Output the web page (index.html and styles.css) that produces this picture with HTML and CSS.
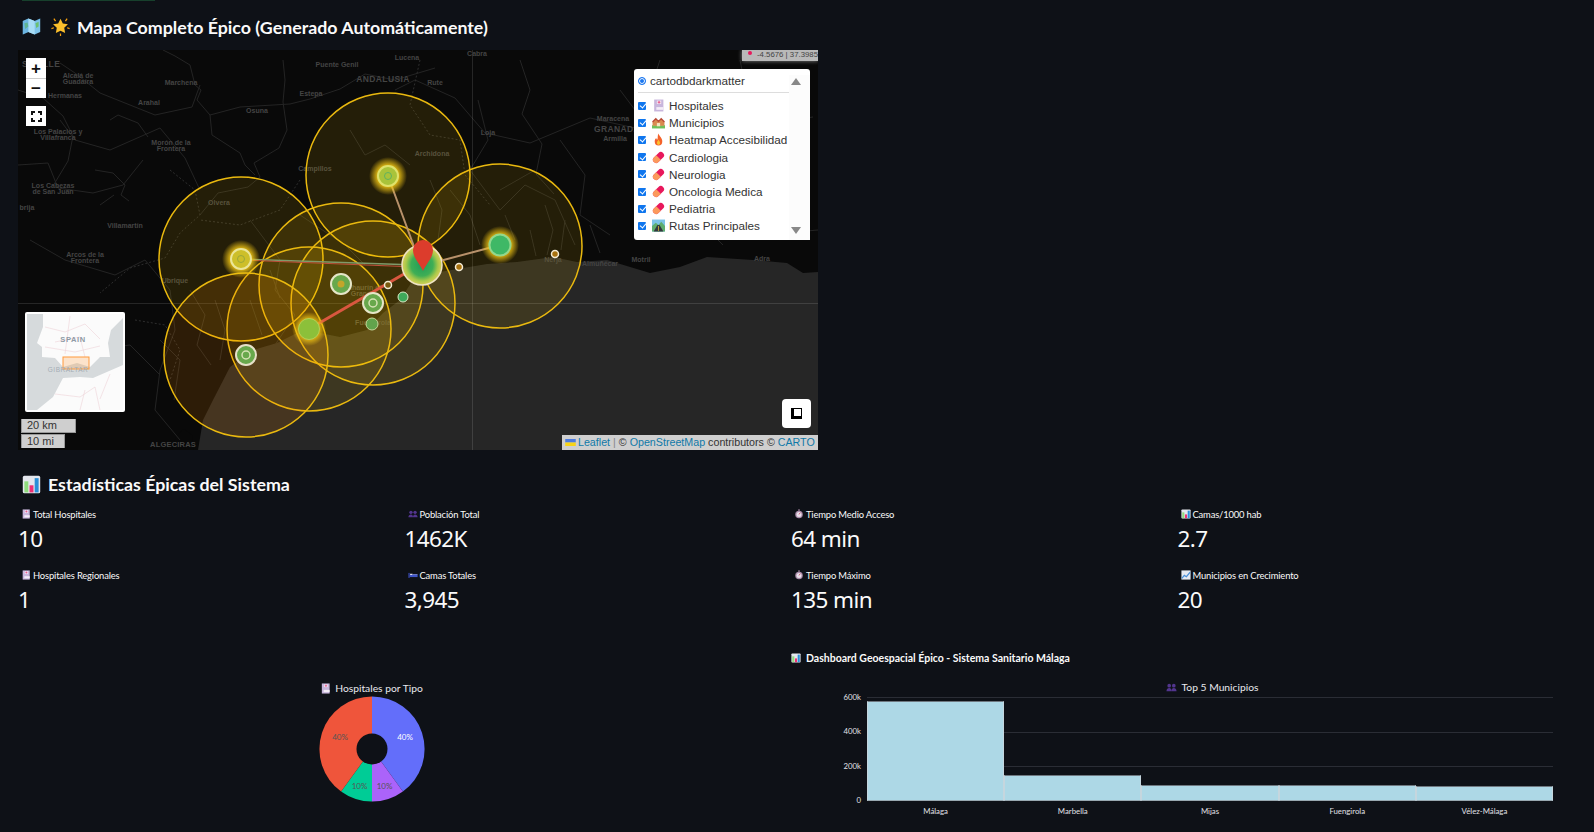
FILE: index.html
```html
<!DOCTYPE html>
<html lang="es">
<head>
    <meta charset="UTF-8">
    <title>Mapa Completo Épico</title>
    <link rel="stylesheet" href="styles.css">
</head>
<body>
    <!-- emoji, drawn by hand since there is no colour emoji font -->
    <svg class="defs" width="0" height="0">
        <defs>
            <symbol id="e-map" viewBox="0 0 24 24">
                <path d="M1 5l7-3 8 3 7-3v17l-7 3-8-3-7 3z" fill="#7fc4ea"/>
                <path d="M8 2l8 3v17l-8-3z" fill="#a8dcf5"/>
                <path d="M3 8l4-1 1 5-4 3zM17 8l4-2v6l-3 2z" fill="#6cc070"/>
                <path d="M1 5l7-3v17l-7 3zM16 5l7-3v1l-7 3z" fill="#4a9ad0" opacity=".35"/>
            </symbol>
            <symbol id="e-star" viewBox="1 1 22 23">
                <path d="M12 3l2.800 5.800 6.200.9-4.500 4.400 1.100 6.300L12 17.500l-5.600 2.900 1.100-6.300L3 9.700l6.200-.9z" fill="#fbbf2c"/>
                <path d="M4 3l2 3M20 3l-2 3M1 15l3-1M23 15l-3-1M12 21v3" stroke="#f59e0b" stroke-width="1.500"/>
            </symbol>
            <symbol id="e-chart" viewBox="0 0 24 24">
                <rect x="1" y="1" width="22" height="22" rx="2" fill="#e4e7ee"/>
                <rect x="3" y="8" width="5" height="14" fill="#8fdc7c"/>
                <rect x="9.500" y="13" width="5" height="9" fill="#ee2f74"/>
                <rect x="16" y="4" width="5" height="18" fill="#2a8fd8"/>
            </symbol>
            <symbol id="e-hospital" viewBox="0 0 24 24">
                <rect x="4" y="1" width="17" height="22" fill="#c8b6dc"/>
                <rect x="9" y="3" width="8" height="6" fill="#f3e9f5"/>
                <path d="M13 3.500v5M10.500 6h5" stroke="#e8447a" stroke-width="1.600"/>
                <rect x="8" y="15" width="13" height="5" fill="#f4eef8"/>
            </symbol>
            <symbol id="e-people" viewBox="0 0 24 24">
                <circle cx="7" cy="8" r="4" fill="#52358e"/>
                <circle cx="17" cy="8" r="4" fill="#52358e"/>
                <path d="M1 20c0-5 3-7 6-7s5 2 5 7zM12 20c0-5 2-7 5-7s6 2 6 7z" fill="#52358e"/>
            </symbol>
            <symbol id="e-timer" viewBox="0 0 24 24">
                <circle cx="12" cy="13" r="9" fill="#a88aa8"/>
                <circle cx="12" cy="13" r="6" fill="#e8e0ea"/>
                <path d="M12 13l3-4" stroke="#d23a5a" stroke-width="2"/>
                <rect x="10" y="1" width="4" height="3" fill="#a88aa8"/>
            </symbol>
            <symbol id="e-bed" viewBox="0 0 24 24">
                <rect x="1" y="7" width="3" height="12" fill="#3a4ab0"/>
                <rect x="4" y="12" width="19" height="5" fill="#3f55c8"/>
                <rect x="5" y="9" width="6" height="3" fill="#d6daf2"/>
                <rect x="11" y="10" width="12" height="2" fill="#7f8ce0"/>
            </symbol>
            <symbol id="e-trend" viewBox="0 0 24 24">
                <rect x="1" y="1" width="22" height="22" fill="#e6e9f2"/>
                <path d="M2 20l6-7 5 3 9-11" fill="none" stroke="#4a90d9" stroke-width="3"/>
            </symbol>
            <symbol id="e-pill" viewBox="0 0 24 24">
                <g transform="rotate(-45 12 12)">
                    <rect x="0" y="6" width="24" height="12" rx="6" fill="#e8185c"/>
                    <path d="M12 6H6a6 6 0 0 0 0 12h6z" fill="#fb9a5c"/>
                </g>
            </symbol>
            <symbol id="e-fire" viewBox="0 0 24 24">
                <path d="M12 1c1 5 7 8 7 14a7 8 0 0 1-14 0c0-3 1.500-5 3-6 0 2 1 3 2 3 1-3 0-7 2-11z" fill="#f4622a"/>
                <path d="M12 12c1 3 3 4 3 6a3 4 0 0 1-6 0c0-2 2-3 3-6z" fill="#fbc02d"/>
            </symbol>
            <symbol id="e-town" viewBox="0 0 24 24">
                <rect x="0" y="17" width="24" height="6" fill="#6fbf5a"/>
                <path d="M1 11l6-6 5 5 5-5 6 6v7H1z" fill="#d98a50"/>
                <path d="M1 11l6-6 5 5 5-5 6 6" fill="none" stroke="#b84a36" stroke-width="2.500"/>
                <rect x="9" y="13" width="6" height="6" fill="#f4e4c0"/>
            </symbol>
            <symbol id="e-road" viewBox="0 0 24 24">
                <rect x="0" y="1" width="24" height="22" fill="#7cc4e8"/>
                <path d="M0 13l7-6 5 4 5-6 7 8v10H0z" fill="#5fae70"/>
                <path d="M10 11h4l7 12H3z" fill="#33383f"/>
                <path d="M12 13v9" stroke="#f6d32e" stroke-width="1.200"/>
            </symbol>
        </defs>
    </svg>

    <div class="status-edge"></div>

    <main class="page">
        <h3 class="section-title map-title">
            <svg class="emoji"><use href="#e-map"/></svg>
            <svg class="emoji star"><use href="#e-star"/></svg>
            Mapa Completo Épico (Generado Automáticamente)
        </h3>

        <div class="map">
            <svg class="map-canvas" width="800" height="400" viewBox="18 50 800 400">
                <defs>
                    <radialGradient id="glow-y">
                        <stop offset="55%" stop-color="#f2c614" stop-opacity=".9"/>
                        <stop offset="100%" stop-color="#f2c614" stop-opacity="0"/>
                    </radialGradient>
                    <radialGradient id="heat">
                        <stop offset="0%" stop-color="#1f9d5a"/>
                        <stop offset="55%" stop-color="#3fae55"/>
                        <stop offset="80%" stop-color="#a8c84a"/>
                        <stop offset="100%" stop-color="#d8cf5a"/>
                    </radialGradient>
                </defs>

                <rect x="18" y="50" width="800" height="400" fill="#262626"/>
                <!-- land -->
                <path fill="#090909" d="M18 50H818V272L803 273 787 263 753 260 707 257 680 267 650 273 607 260 577 262 553 257 517 262 487 264 463 268 440 272 413 280 400 300 383 313 367 330 340 337 320 333 297 333 277 343 253 350 230 367 213 400 203 420 198 450H18z"/>
                <path fill="#090909" d="M172 450l4-14 8-7 8 6 2 15z"/>

                <!-- borders and rivers -->
                <g class="map-line">
                    <path d="M163 50l12 6 15 9 5 20 6 5-4 10 13 15 2 20 28 18 5 12 10 10"/>
                    <path d="M200 85l-8 22-37 8-25-10-30-12-25-20-15-10M210 115l30-8 50-3 20-5 30-10 25-15 30 6 40-12"/>
                    <path d="M283 60l2 20-2 22 4 28-8 18-25 15 6 14-12 10-30 6-18 22"/>
                    <path d="M18 165l30-2 10 25 35 5 30-8 20-25M60 120l15 20 35 10 50-22 25 30 14 30"/>
                    <path d="M395 90l20-10 40 18 30 35 45 10 60-25 45 10 35-15 60 12 80-20"/>
                    <path d="M478 100l10 40-18 30 30 40 25-25 30 15 20 45M560 140l25 35-5 40 30 20M640 200l20 30 60-10 40 15 58-5"/>
                    <path d="M30 240l35 20 50 15 30-15 25 30 5 40-15 40-5 40 25 30M60 320l30 30 40-5 30 30"/>
                    <path d="M250 220l30 40-5 30 20 25-20 30M300 215l45 30 20 20M450 190l20 25 10 30M500 190l35-20M620 90l30 40 55-15 60 25"/>
                    <path d="M95 170l18 3 12 12-4 10 8 6M100 205l14-10M18 90l25 8 20 18 10 20-5 25-15 25M110 120l8-5 20 8 10 14"/>
                    <path d="M520 60l10 30-8 24 20 30-6 30 18 20M660 60l-10 30 20 35 40 10 30-20 50 8M700 150l10 40-12 30 25 25M740 60l8 40 30 22 35-5"/>
                    <path d="M545 205l8 25 -6 25M530 230l6 26M505 215l10 25M565 220l-4 30M590 225l10 28M430 180l12 30 -4 30M350 130l15 25 20-10 25 20"/>
                    <path d="M190 290l15 25 -8 30 14 20M215 300l10 30 -5 30M160 340l20 20 -6 40M270 270l10 28M250 300l12 35"/>
                </g>
                <g class="map-line dashed">
                    <path d="M170 170l25 20 5 25-20 18-15 25-35 10-30 25M300 180l-20 30-40 15-40-5M420 60l-10 45 20 30 30 5 5 35 25 30M135 320l30 5 15 25 -10 30"/>
                </g>

                <path class="graticule" d="M472.500 50V450M18 303.500H818"/>

                <!-- place names -->
                <g class="map-label">
                    <text x="22" y="67" class="big">SEVILLE</text>
                    <text x="78" y="78">Alcalá de</text><text x="78" y="84">Guadaíra</text>
                    <text x="65" y="98">Hermanas</text>
                    <text x="181" y="85">Marchena</text>
                    <text x="149" y="105">Arahal</text>
                    <text x="257" y="113">Osuna</text>
                    <text x="337" y="67">Puente Genil</text>
                    <text x="407" y="60">Lucena</text>
                    <text x="383" y="82" class="big">ANDALUSIA</text>
                    <text x="311" y="96">Estepa</text>
                    <text x="58" y="134">Los Palacios y</text><text x="58" y="140">Villafranca</text>
                    <text x="171" y="145">Morón de la</text><text x="171" y="151">Frontera</text>
                    <text x="53" y="188">Los Cabezas</text><text x="53" y="194">de San Juan</text>
                    <text x="27" y="210">brija</text>
                    <text x="125" y="228">Villamartín</text>
                    <text x="219" y="205">Olvera</text>
                    <text x="315" y="171">Campillos</text>
                    <text x="432" y="156">Archidona</text>
                    <text x="488" y="135">Loja</text>
                    <text x="435" y="85">Rute</text>
                    <text x="477" y="56">Cabra</text>
                    <text x="613" y="121">Maracena</text>
                    <text x="617" y="132" class="big">GRANADA</text>
                    <text x="615" y="141">Armilla</text>
                    <text x="85" y="257">Arcos de la</text><text x="85" y="263">Frontera</text>
                    <text x="175" y="283">Ubrique</text>
                    <text x="363" y="290">Alhaurín el</text><text x="363" y="296">Grande</text>
                    <text x="373" y="325">Fuengirola</text>
                    <text x="553" y="262">Nerja</text>
                    <text x="600" y="266">Almuñécar</text>
                    <text x="641" y="262">Motril</text>
                    <text x="762" y="261">Adra</text>
                    <text x="173" y="447" class="big coast">ALGECIRAS</text>
                </g>

                <!-- coverage circles -->
                <g class="reach">
                    <circle cx="388" cy="175" r="82"/>
                    <circle cx="500" cy="246" r="82"/>
                    <circle cx="241" cy="259" r="82"/>
                    <circle cx="341" cy="285" r="82"/>
                    <circle cx="373" cy="303" r="82"/>
                    <circle cx="309" cy="329" r="82"/>
                </g>
                <circle class="reach orange" cx="246" cy="355" r="82"/>

                <!-- routes -->
                <path class="route tan" d="M388 176L416 252M500 245L436 262"/>
                <path class="route green" d="M241 259L416 265"/>
                <path class="route red-thin" d="M241 260L416 267"/>
                <path class="route red" d="M309 329L416 267"/>

                <!-- hospitals -->
                <circle cx="388" cy="176" r="19" fill="url(#glow-y)"/>
                <circle cx="388" cy="176" r="10" fill="#a9c33a" stroke="#dfe26c" stroke-width="2"/>
                <circle cx="388" cy="176" r="3.500" fill="none" stroke="#62b25e"/>
                <circle cx="241" cy="259" r="19" fill="url(#glow-y)"/>
                <circle cx="241" cy="259" r="10" fill="#cdbf2a" stroke="#ebe69a" stroke-width="2"/>
                <circle cx="241" cy="259" r="3.500" fill="none" stroke="#9aa83a"/>
                <circle cx="309" cy="329" r="17" fill="url(#glow-y)"/>
                <circle cx="309" cy="329" r="10.500" fill="#8cc03a" stroke="#b5cf56"/>
                <circle cx="500" cy="245" r="19" fill="url(#glow-y)"/>
                <circle cx="500" cy="245" r="10.500" fill="#3fb866" stroke="#93d88e" stroke-width="2"/>
                <circle cx="341" cy="284" r="10" fill="#68a84c" stroke="#e6e6c8" stroke-width="2"/>
                <circle cx="341" cy="284" r="3.500" fill="#c4a52a"/>
                <circle cx="373" cy="303" r="10" fill="#68a84c" stroke="#e6e6c8" stroke-width="2"/>
                <circle cx="373" cy="303" r="4" fill="none" stroke="#d5e2b4" stroke-width="1.500"/>
                <circle cx="246" cy="355" r="10" fill="#68a84c" stroke="#e6e0c8" stroke-width="2"/>
                <circle cx="246" cy="355" r="4" fill="none" stroke="#d5e2b4" stroke-width="1.500"/>
                <circle cx="372" cy="324" r="6" fill="#62a44c" stroke="#c4d89a"/>
                <circle cx="403" cy="297" r="5" fill="#3fa95a" stroke="#d9ecc8"/>
                <circle cx="388" cy="285" r="3.500" fill="#7a5a10" stroke="#f2ecd6" stroke-width="1.500"/>
                <circle cx="459" cy="267" r="3.500" fill="#a8720f" stroke="#f4ecd6" stroke-width="1.500"/>
                <circle cx="555" cy="254" r="3.500" fill="#a8720f" stroke="#f4ecd6" stroke-width="1.500"/>

                <!-- main hub and pin -->
                <circle cx="422" cy="265" r="20" fill="url(#heat)" stroke="#eee3c4" stroke-width="1.500"/>
                <path d="M423 271C420 264 413 258 413 250a10 10 0 0 1 20 0c0 8-7 14-10 21z" fill="#dc3c2c"/>
            </svg>

            <div class="zoom-box">
                <button class="zoom-btn">+</button>
                <button class="zoom-btn">−</button>
            </div>
            <div class="fullscreen-btn">
                <svg width="11" height="11" viewBox="0 0 11 11"><path d="M1 4V1H4M7 1H10V4M10 7V10H7M4 10H1V7" fill="none" stroke="#111" stroke-width="2"/></svg>
            </div>

            <div class="coords"><i></i>-4.5676 | 37.3985</div>

            <div class="layers">
                <div class="layers-scroll">
                    <label class="base-row"><span class="radio"></span>cartodbdarkmatter</label>
                    <hr>
                    <div class="layer"><span class="check"></span><svg class="emoji"><use href="#e-hospital"/></svg>Hospitales</div>
                    <div class="layer"><span class="check"></span><svg class="emoji"><use href="#e-town"/></svg>Municipios</div>
                    <div class="layer"><span class="check"></span><svg class="emoji"><use href="#e-fire"/></svg>Heatmap Accesibilidad</div>
                    <div class="layer"><span class="check"></span><svg class="emoji"><use href="#e-pill"/></svg>Cardiologia</div>
                    <div class="layer"><span class="check"></span><svg class="emoji"><use href="#e-pill"/></svg>Neurologia</div>
                    <div class="layer"><span class="check"></span><svg class="emoji"><use href="#e-pill"/></svg>Oncologia Medica</div>
                    <div class="layer"><span class="check"></span><svg class="emoji"><use href="#e-pill"/></svg>Pediatria</div>
                    <div class="layer"><span class="check"></span><svg class="emoji"><use href="#e-road"/></svg>Rutas Principales</div>
                </div>
                <div class="scrollbar">
                    <span class="arrow up"></span>
                    <span class="arrow down"></span>
                </div>
            </div>

            <svg class="minimap" width="100" height="100" viewBox="0 0 100 100">
                <rect width="100" height="100" fill="#fff"/>
                <rect x="2" y="2" width="96" height="96" fill="#d6dadc"/>
                <path d="M18 2H98V6L86 18 83 31 85 45 75 45 65 55 52 51 38 55 30 46 17 45 17 35 12 31 18 15z" fill="#fbfbfb"/>
                <path d="M12 98L28 85 38 66 55 65 68 66 98 53V98z" fill="#fbfbfb"/>
                <g fill="none" stroke="#efd3d8" stroke-width=".6">
                    <path d="M20 15l20 5 20-8 15 15M30 30l25-5 5 20M45 4l-5 38M20 35l30 5 25-6M30 82l25 3 15-10 5 23M60 78l-5 20M85 62l-10 25"/>
                </g>
                <rect x="38" y="45" width="26" height="12" fill="#ff9a3c" fill-opacity=".25" stroke="#ff9a3c"/>
                <text class="mini-label strong" x="48" y="30">SPAIN</text>
                <text class="mini-label" x="43" y="60">GIBRALTAR</text>
            </svg>

            <div class="scale">
                <div class="scale-bar km">20 km</div>
                <div class="scale-bar mi">10 mi</div>
            </div>

            <div class="draw-btn">
                <svg width="11" height="11" viewBox="0 0 11 11"><rect width="11" height="11" fill="#000"/><rect x="3" y="1" width="7" height="7" fill="#fff"/></svg>
            </div>

            <div class="attribution">
                <svg class="flag" width="11" height="7" viewBox="0 0 12 8"><rect width="12" height="4" fill="#4c7be0"/><rect y="4" width="12" height="4" fill="#f7d417"/></svg>
                <a>Leaflet</a> <span class="sep">|</span> © <a>OpenStreetMap</a> contributors © <a>CARTO</a>
            </div>
        </div>

        <h3 class="section-title stats-title">
            <svg class="emoji"><use href="#e-chart"/></svg>
            Estadísticas Épicas del Sistema
        </h3>

        <div class="metrics">
            <div class="metric">
                <div class="metric-label"><svg class="emoji"><use href="#e-hospital"/></svg>Total Hospitales</div>
                <div class="metric-value">10</div>
            </div>
            <div class="metric">
                <div class="metric-label"><svg class="emoji"><use href="#e-people"/></svg>Población Total</div>
                <div class="metric-value">1462K</div>
            </div>
            <div class="metric">
                <div class="metric-label"><svg class="emoji"><use href="#e-timer"/></svg>Tiempo Medio Acceso</div>
                <div class="metric-value">64 min</div>
            </div>
            <div class="metric">
                <div class="metric-label"><svg class="emoji"><use href="#e-chart"/></svg>Camas/1000 hab</div>
                <div class="metric-value">2.7</div>
            </div>
            <div class="metric">
                <div class="metric-label"><svg class="emoji"><use href="#e-hospital"/></svg>Hospitales Regionales</div>
                <div class="metric-value">1</div>
            </div>
            <div class="metric">
                <div class="metric-label"><svg class="emoji"><use href="#e-bed"/></svg>Camas Totales</div>
                <div class="metric-value">3,945</div>
            </div>
            <div class="metric">
                <div class="metric-label"><svg class="emoji"><use href="#e-timer"/></svg>Tiempo Máximo</div>
                <div class="metric-value">135 min</div>
            </div>
            <div class="metric">
                <div class="metric-label"><svg class="emoji"><use href="#e-trend"/></svg>Municipios en Crecimiento</div>
                <div class="metric-value">20</div>
            </div>
        </div>

        <div class="charts">
            <div class="chart-col">
                <div class="pie-wrap">
                    <div class="chart-name"><svg class="emoji"><use href="#e-hospital"/></svg>Hospitales por Tipo</div>
                    <svg class="pie" width="106" height="106" viewBox="-53 -53 106 106">
                        <path d="M0 0V-52.500A52.500 52.500 0 0 1 30.900 42.500z" fill="#636efa"/>
                        <path d="M0 0L30.900 42.500A52.500 52.500 0 0 1 0 52.500z" fill="#ab63fa"/>
                        <path d="M0 0V52.500A52.500 52.500 0 0 1 -30.900 42.500z" fill="#00cc96"/>
                        <path d="M0 0L-30.900 42.500A52.500 52.500 0 0 1 0 -52.500z" fill="#ef553b"/>
                        <circle r="15.500" fill="#0e1117"/>
                        <text class="pie-pct light" x="33" y="-11">40%</text>
                        <text class="pie-pct" x="-32" y="-11">40%</text>
                        <text class="pie-pct" x="-12.500" y="38">10%</text>
                        <text class="pie-pct" x="12.500" y="38">10%</text>
                    </svg>
                </div>
            </div>
            <div class="chart-col">
                <div class="dash-title"><svg class="emoji"><use href="#e-chart"/></svg>Dashboard Geoespacial Épico - Sistema Sanitario Málaga</div>
                <div class="chart-name bars-name"><svg class="emoji"><use href="#e-people"/></svg>Top 5 Municipios</div>
                <div class="bar-chart">
                    <div class="y-axis">
                        <span>600k</span><span>400k</span><span>200k</span><span>0</span>
                    </div>
                    <div class="plot">
                        <div class="gridline"></div>
                        <div class="gridline"></div>
                        <div class="gridline"></div>
                        <div class="bars">
                            <div class="bar" style="height: 100px"></div>
                            <div class="bar" style="height: 26px"></div>
                            <div class="bar" style="height: 16px"></div>
                            <div class="bar" style="height: 16px"></div>
                            <div class="bar" style="height: 15px"></div>
                        </div>
                        <div class="x-axis">
                            <span>Málaga</span><span>Marbella</span><span>Mijas</span><span>Fuengirola</span><span>Vélez-Málaga</span>
                        </div>
                    </div>
                </div>
            </div>
        </div>
    </main>
</body>
</html>
```

FILE: styles.css
```css
* {
    box-sizing: border-box;
}
html, body {
    height: 832px;
    overflow: hidden;
}
body {
    margin: 0;
    background: #0e1117;
    color: #fafafa;
    font-family: Lato, "Noto Sans", Arial, sans-serif;
}
.defs {
    position: absolute;
}
.emoji {
    width: 1em;
    height: 1em;
    flex: none;
}
.status-edge {
    height: 1px;
    width: 133px;
    margin-left: 22px;
    background: #17402c;
}
.page {
    padding: 0 18px;
}

/* headings */
.section-title {
    display: flex;
    align-items: center;
    margin: 0;
    font-size: 17.800px;
    font-weight: 700;
    white-space: nowrap;
}
.section-title .emoji {
    width: 19px;
    height: 19px;
}
.map-title {
    height: 49px;
    padding: 2px 0 0 4px;
    gap: 7px;
}
.map-title .star {
    margin-left: 3px;
}
.stats-title {
    height: 34px;
    margin-top: 17px;
    padding-left: 4px;
    gap: 7px;
}

/* map */
.map {
    position: relative;
    width: 800px;
    height: 400px;
    overflow: hidden;
    font-family: "Liberation Sans", Arial, sans-serif;
}
.map-canvas {
    display: block;
}
.map-line path {
    fill: none;
    stroke: #242424;
    stroke-width: 1;
}
.map-line.dashed path {
    stroke-dasharray: 2 2;
    stroke: #2e2e2e;
}
.graticule {
    fill: none;
    stroke: #fff;
    stroke-opacity: .12;
}
.map-label text {
    fill: #444;
    font-size: 7px;
    font-weight: 700;
    text-anchor: middle;
}
.map-label text.big {
    font-size: 8.500px;
    letter-spacing: .4px;
}
.map-label text.coast {
    font-size: 7.500px;
    letter-spacing: .2px;
}
.map-label text[x="22"] {
    text-anchor: start;
}
.reach circle, circle.reach {
    fill: #ffc800;
    fill-opacity: .11;
    stroke: #eab90f;
    stroke-width: 1.500;
}
circle.reach.orange {
    fill: #ff8c00;
    fill-opacity: .15;
}
.route {
    fill: none;
}
.route.tan {
    stroke: #b8916a;
    stroke-width: 2;
}
.route.green {
    stroke: #7f9a6a;
    stroke-width: 1.500;
}
.route.red-thin {
    stroke: #c0503c;
    stroke-width: 1;
}
.route.red {
    stroke: #d9573f;
    stroke-width: 3;
}

/* leaflet controls, over the map */
.zoom-box {
    position: absolute;
    left: 8px;
    top: 8px;
    width: 20px;
}
.zoom-btn {
    display: block;
    width: 20px;
    height: 20px;
    padding: 0;
    border: 0;
    background: #fff;
    color: #111;
    font: 700 17px/19px "Liberation Sans", Arial, sans-serif;
}
.zoom-btn + .zoom-btn {
    border-top: 1px solid #ccc;
}
.fullscreen-btn {
    position: absolute;
    left: 8px;
    top: 56px;
    width: 20px;
    height: 20px;
    display: flex;
    align-items: center;
    justify-content: center;
    background: #fff;
}
.coords {
    position: absolute;
    right: 0;
    top: 0;
    width: 76px;
    height: 11px;
    padding-left: 15px;
    background: #b9b9b9;
    box-shadow: 0 0 4px #888;
    color: #444;
    font-size: 7.800px;
    line-height: 10px;
    white-space: nowrap;
}
.coords i {
    position: absolute;
    left: 6px;
    top: 1px;
    width: 4px;
    height: 4px;
    border-radius: 50%;
    background: #e8185c;
}
.layers {
    position: absolute;
    left: 616px;
    top: 19px;
    width: 176px;
    height: 171px;
    padding: 6px 0 0 4px;
    display: flex;
    background: #fff;
    border-radius: 3px;
    color: #333;
    font-size: 11.700px;
}
.layers-scroll {
    width: 151px;
    white-space: nowrap;
}
.layers hr {
    margin: 5px 0 4px;
    border: 0;
    border-top: 1px solid #ddd;
}
.base-row {
    display: flex;
    align-items: center;
    height: 13px;
    margin-top: -1px;
    margin-bottom: 5px;
}
.radio {
    width: 8px;
    height: 8px;
    margin: 0 4px 0 0;
    border-radius: 50%;
    border: 1.500px solid #1976f0;
    background: #1976f0;
    box-shadow: inset 0 0 0 1px #fff;
}
.layer {
    display: flex;
    align-items: center;
    height: 17.200px;
}
.layer .emoji {
    width: 13px;
    height: 13px;
    margin: 0 4px 0 -1px;
}
.check {
    position: relative;
    width: 8px;
    height: 8px;
    margin-right: 7px;
    border-radius: 1px;
    background: #0f76ee;
}
.check::after {
    content: "";
    position: absolute;
    left: 2.500px;
    top: .5px;
    width: 3px;
    height: 5px;
    border: solid #fff;
    border-width: 0 1.500px 1.500px 0;
    transform: rotate(40deg);
}
.scrollbar {
    flex: 1;
    display: flex;
    flex-direction: column;
    justify-content: space-between;
    align-items: center;
    padding: 3px 7px 6px 0;
    background: #fcfcfc;
}
.arrow {
    width: 0;
    height: 0;
    border-left: 5px solid transparent;
    border-right: 5px solid transparent;
}
.arrow.up {
    border-bottom: 7px solid #888;
}
.arrow.down {
    border-top: 7px solid #888;
}
.minimap {
    position: absolute;
    left: 7px;
    top: 262px;
    border-radius: 2px;
}
.mini-label {
    fill: #a4adb5;
    font-size: 6.500px;
    text-anchor: middle;
    letter-spacing: .5px;
}
.mini-label.strong {
    fill: #8e9aa5;
    font-size: 7.500px;
    font-weight: 700;
    letter-spacing: .6px;
}
.scale {
    position: absolute;
    left: 3px;
    top: 369px;
    color: #333;
    font-size: 11px;
}
.scale-bar {
    height: 14px;
    margin-bottom: 1px;
    padding-left: 5px;
    background: #cfcfcf;
    line-height: 13px;
    border: 1px solid #999;
    border-top: 0;
}
.scale-bar.km {
    width: 55px;
}
.scale-bar.mi {
    width: 44px;
    border-bottom: 0;
    border-top: 1px solid #999;
}
.draw-btn {
    position: absolute;
    left: 764px;
    top: 349px;
    width: 29px;
    height: 29px;
    display: flex;
    align-items: center;
    justify-content: center;
    background: #fff;
    border-radius: 4px;
}
.attribution {
    position: absolute;
    right: 0;
    bottom: 0;
    height: 15px;
    width: 256px;
    padding-left: 3px;
    background: #cfcfcf;
    color: #333;
    font-size: 10.700px;
    line-height: 15px;
    white-space: nowrap;
}
.attribution a {
    color: #0f79a8;
}
.attribution .sep {
    color: #888;
}
.flag {
    margin-right: -1px;
}

/* metrics */
.metrics {
    display: grid;
    grid-template-columns: repeat(4, 370.5px);
    column-gap: 16px;
    margin-top: 4px;
}
.metric {
    height: 61px;
}
.metric-label {
    display: flex;
    align-items: center;
    height: 18px;
    padding-left: 3px;
    font-size: 9.400px;
    letter-spacing: -.15px;
    white-space: nowrap;
}
.metric-label .emoji {
    width: 10px;
    height: 10px;
    margin-right: 2px;
}
.metric-value {
    margin-top: 1px;
    font-family: "Noto Sans", Arial, sans-serif;
    font-size: 22.500px;
    letter-spacing: -.6px;
    line-height: 30px;
}

/* charts */
.charts {
    display: grid;
    grid-template-columns: 757px 1fr;
    column-gap: 16px;
    margin-top: 24px;
}
.chart-col {
    position: relative;
    height: 190px;
}
.pie-wrap {
    display: flex;
    flex-direction: column;
    align-items: center;
    width: 707px;
    padding-top: 30px;
}
.pie {
    display: block;
    margin-top: 1px;
}
.pie-pct {
    fill: #555;
    font-size: 8px;
    text-anchor: middle;
    dominant-baseline: middle;
}
.pie-pct.light {
    fill: #fff;
}
.chart-name {
    display: flex;
    align-items: center;
    justify-content: center;
    height: 14px;
    color: #e8e8ee;
    font-size: 10.300px;
    white-space: nowrap;
}
.chart-name .emoji {
    width: 11px;
    height: 11px;
    margin-right: 4px;
}
.dash-title {
    display: flex;
    align-items: center;
    height: 14px;
    font-size: 10.500px;
    font-weight: 700;
    white-space: nowrap;
}
.dash-title .emoji {
    width: 10px;
    height: 10px;
    margin-right: 5px;
}
.bars-name {
    width: 843px;
    margin-top: 15px;
}
.bar-chart {
    display: flex;
    margin-top: 3px;
}
.y-axis {
    width: 76px;
    height: 113px;
    display: flex;
    flex-direction: column;
    justify-content: space-between;
    align-items: flex-end;
    padding-right: 6px;
    color: #e0e0e6;
    font-size: 7.800px;
    line-height: 10px;
    margin-top: -5px;
}
.plot {
    position: relative;
    width: 686px;
    height: 104px;
}
.gridline {
    height: 34.500px;
    border-top: 1px solid #2a2d35;
}
.bars {
    position: absolute;
    left: 0;
    right: 0;
    bottom: 0;
    display: flex;
    align-items: flex-end;
    height: 104px;
}
.bar {
    flex: 1;
    background: #add8e6;
    border: 1px solid #c5d6de;
    border-top-color: #6f7880;
    border-bottom-color: #98a8b0;
}
.x-axis {
    position: absolute;
    top: 109px;
    left: 0;
    right: 0;
    display: flex;
    color: #e0e0e6;
    font-size: 7.800px;
}
.x-axis span {
    flex: 1;
    text-align: center;
}
```
